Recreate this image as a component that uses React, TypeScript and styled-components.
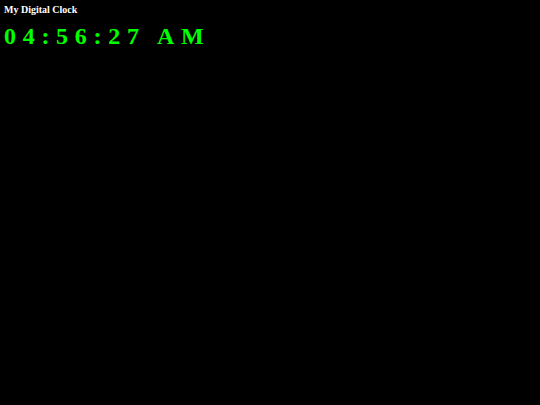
import React, { useState } from "react";
import styled, { createGlobalStyle } from "styled-components";

const GlobalStyle = createGlobalStyle`
  html, body {
    margin: 0;
    padding: 0;
    background: #000;
    height: 100%;
  }
  #root {
    min-height: 100%;
  }
`;

const Page = styled.div`
  display: flex;
  flex-direction: column;
  gap: 6px;
  padding: 4px;
  min-height: 405px;
  box-sizing: border-box;
  background: #000;
`;

const Title = styled.h1`
  margin: 0;
  font-family: "Liberation Serif", "Times New Roman", serif;
  font-size: 10px;
  font-weight: bold;
  color: #fff;
  line-height: 12px;
`;

const ClockFace = styled.div`
  font-family: Georgia, "Liberation Serif", "DejaVu Serif", serif;
  font-size: 24px;
  font-weight: bold;
  color: #0f0;
  letter-spacing: 6.7px;
  font-variant-numeric: oldstyle-nums;
  line-height: 28px;
`;

const App: React.FC = () => {
  const [time] = useState("04:56:27 AM");

  return (
    <Page>
      <GlobalStyle />
      <Title>My Digital Clock</Title>
      <ClockFace>{time}</ClockFace>
    </Page>
  );
};

export default App;
